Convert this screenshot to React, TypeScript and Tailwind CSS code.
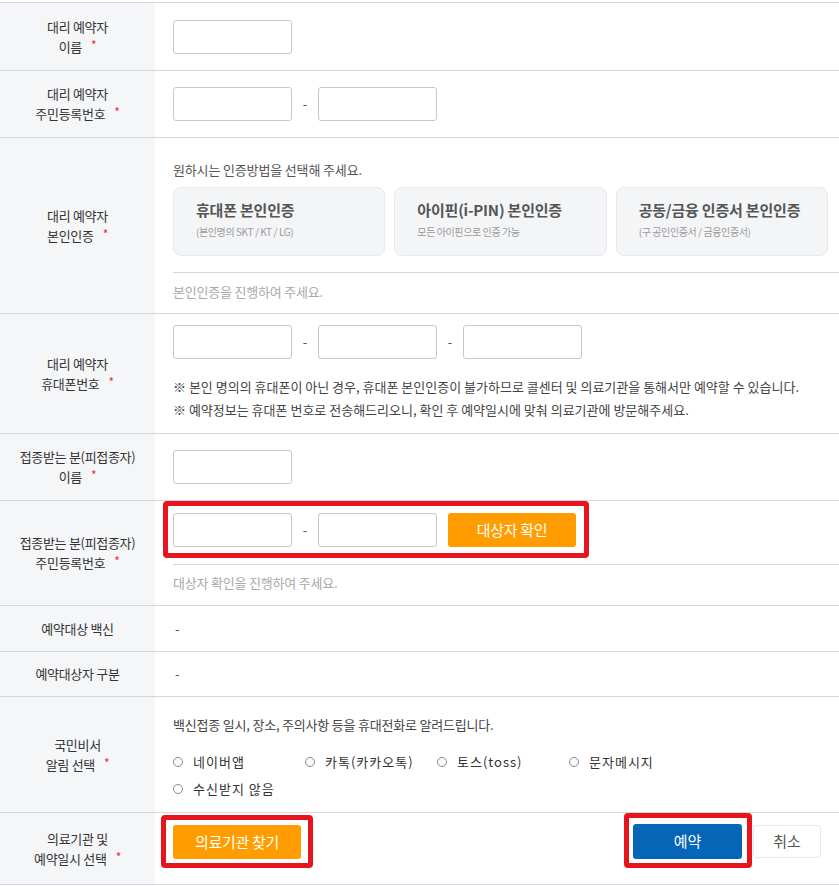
import React from "react";

function Star() {
  return <span className="ml-[9px] text-[12px] text-[#e5323a] relative top-[-2px]">*</span>;
}

function Label({ lines, star }: { lines: string[]; star?: boolean }) {
  return (
    <div className="w-[155px] shrink-0 bg-[#f5f6f8] flex flex-col items-center justify-center text-center text-[13px] leading-[20px] text-[#333] tracking-[-0.3px]">
      {lines.map((l, i) => (
        <div key={i}>
          {l}
          {star && i === lines.length - 1 ? <Star /> : null}
        </div>
      ))}
    </div>
  );
}

function Input() {
  return <div className="w-[119px] h-[34px] shrink-0 border border-[#c8c8c8] rounded-[3px] bg-white" />;
}

function Dash() {
  return <span className="w-[26px] text-center text-[13px] text-[#555]">-</span>;
}

function Row({ h, children }: { h: string; children: React.ReactNode }) {
  return <div className={`flex border-b border-[#d5d7dc] ${h}`}>{children}</div>;
}

const certs = [
  { t: "휴대폰 본인인증", s: "(본인명의 SKT / KT / LG)" },
  { t: "아이핀(i-PIN) 본인인증", s: "모든 아이핀으로 인증 가능" },
  { t: "공동/금융 인증서 본인인증", s: "(구 공인인증서 / 금융인증서)" },
];

const radios = ["네이버앱", "카톡(카카오톡)", "토스(toss)", "문자메시지"];

function Radio({ label }: { label: string }) {
  return (
    <div className="w-[132px] flex items-center">
      <span className="w-[10px] h-[10px] rounded-full border border-[#8a8a8a] bg-white shrink-0" />
      <span className="ml-[10px] text-[13px] text-[#333] tracking-[1px]">{label}</span>
    </div>
  );
}

export default function App() {
  return (
    <div className="w-[839px] bg-white pt-[2px] font-['Noto_Sans_CJK_KR','Noto_Sans',sans-serif]">
      <div className="border-t border-[#d5d7dc]">
        {/* Row 1 */}
        <Row h="h-[68px]">
          <Label lines={["대리 예약자", "이름"]} star />
          <div className="flex-1 flex items-center pl-[18px]">
            <Input />
          </div>
        </Row>
        {/* Row 2 */}
        <Row h="h-[67px]">
          <Label lines={["대리 예약자", "주민등록번호"]} star />
          <div className="flex-1 flex items-center pl-[18px]">
            <Input />
            <Dash />
            <Input />
          </div>
        </Row>
        {/* Row 3 */}
        <Row h="h-[176px]">
          <Label lines={["대리 예약자", "본인인증"]} star />
          <div className="flex-1 pl-[18px] pt-[22px]">
            <div className="text-[13px] leading-[20px] text-[#555] tracking-[-0.15px]">원하시는 인증방법을 선택해 주세요.</div>
            <div className="grid grid-cols-3 gap-[9px] mr-[11px] mt-[7px]">
              {certs.map((c) => (
                <div key={c.t} className="h-[69px] rounded-[8px] bg-[#f4f5f7] border border-[#e7e9ed] pl-[22px] pt-[11px]">
                  <div className="text-[15px] leading-[22px] font-bold text-[#555] tracking-[-0.2px]">{c.t}</div>
                  <div className="mt-[4px] text-[10px] leading-[14px] text-[#9a9a9a] tracking-[-0.4px]">{c.s}</div>
                </div>
              ))}
            </div>
            <div className="mt-[16px] border-t border-[#d5d7dc] pt-[9px] text-[13px] leading-[20px] text-[#a8a8a8] tracking-[-0.2px]">
              본인인증을 진행하여 주세요.
            </div>
          </div>
        </Row>
        {/* Row 4 */}
        <Row h="h-[120px]">
          <Label lines={["대리 예약자", "휴대폰번호"]} star />
          <div className="flex-1 pl-[18px] pt-[11px]">
            <div className="flex items-center">
              <Input />
              <Dash />
              <Input />
              <Dash />
              <Input />
            </div>
            <div className="mt-[16px] text-[13px] leading-[23px] text-[#444] tracking-[0px]">
              <div>※ 본인 명의의 휴대폰이 아닌 경우, 휴대폰 본인인증이 불가하므로 콜센터 및 의료기관을 통해서만 예약할 수 있습니다.</div>
              <div>※ 예약정보는 휴대폰 번호로 전송해드리오니, 확인 후 예약일시에 맞춰 의료기관에 방문해주세요.</div>
            </div>
          </div>
        </Row>
        {/* Row 5 */}
        <Row h="h-[67px]">
          <Label lines={["접종받는 분(피접종자)", "이름"]} star />
          <div className="flex-1 flex items-center pl-[18px]">
            <Input />
          </div>
        </Row>
        {/* Row 6 */}
        <Row h="h-[105px]">
          <Label lines={["접종받는 분(피접종자)", "주민등록번호"]} star />
          <div className="relative flex-1 pl-[18px] pt-[12px]">
            <div className="flex items-center">
              <Input />
              <Dash />
              <Input />
              <button className="ml-[11px] w-[128px] h-[34px] rounded-[3px] bg-[#ff9d00] text-white text-[15px] tracking-[-0.3px]">
                대상자 확인
              </button>
            </div>
            <div className="mt-[17px] border-t border-[#d5d7dc] pt-[8px] text-[13px] leading-[20px] text-[#a8a8a8] tracking-[-0.2px]">
              대상자 확인을 진행하여 주세요.
            </div>
            <div className="absolute left-[8px] top-0 w-[426px] h-[57px] border-[5px] border-[#e8141c] rounded-[4px] pointer-events-none" />
          </div>
        </Row>
        {/* Row 7 */}
        <Row h="h-[46px]">
          <Label lines={["예약대상 백신"]} />
          <div className="flex-1 flex items-center pl-[20px] text-[13px] text-[#555]">-</div>
        </Row>
        {/* Row 8 */}
        <Row h="h-[45px]">
          <Label lines={["예약대상자 구분"]} />
          <div className="flex-1 flex items-center pl-[20px] text-[13px] text-[#555]">-</div>
        </Row>
        {/* Row 9 */}
        <Row h="h-[116px]">
          <Label lines={["국민비서", "알림 선택"]} star />
          <div className="flex-1 pl-[18px] pt-[18px]">
            <div className="text-[13px] leading-[20px] text-[#444] tracking-[-0.2px]">
              백신접종 일시, 장소, 주의사항 등을 휴대전화로 알려드립니다.
            </div>
            <div className="mt-[13px] flex h-[27px] items-center">
              {radios.map((r) => (
                <Radio key={r} label={r} />
              ))}
            </div>
            <div className="flex h-[27px] items-center">
              <Radio label="수신받지 않음" />
            </div>
          </div>
        </Row>
        {/* Row 10 */}
        <Row h="h-[72px]">
          <Label lines={["의료기관 및", "예약일시 선택"]} star />
          <div className="relative flex-1 flex items-start justify-between pl-[18px] pr-[18px] pt-[12px]">
            <button className="w-[128px] h-[34px] rounded-[3px] bg-[#ff9d00] text-white text-[15px] tracking-[-0.3px]">
              의료기관 찾기
            </button>
            <div className="flex items-start gap-[11px]">
              <button className="w-[109px] h-[35px] -mt-[1px] rounded-[3px] bg-[#0566b8] text-white text-[15px]">예약</button>
              <button className="w-[68px] h-[33px] rounded-[3px] bg-white border border-[#e6e8ec] text-[#555] text-[15px]">취소</button>
            </div>
            <div className="absolute left-[6px] top-[2px] w-[152px] h-[53px] border-[5px] border-[#e8141c] rounded-[4px] pointer-events-none" />
            <div className="absolute left-[469px] top-0 w-[128px] h-[55px] border-[5px] border-[#e8141c] rounded-[4px] pointer-events-none" />
          </div>
        </Row>
      </div>
    </div>
  );
}
